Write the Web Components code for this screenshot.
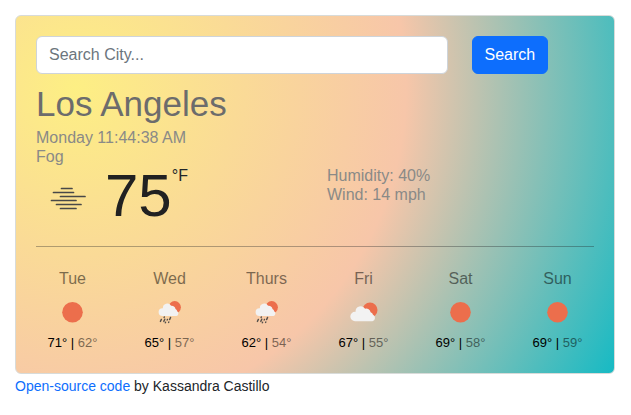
<!DOCTYPE html>
<html lang="en">
<head>
<meta charset="utf-8">
<title>Weather</title>
<style>
  body { margin: 0; background: #fff; color: #212529; font: 16px/24px "Liberation Sans", Arial, sans-serif; }
</style>
</head>
<body>
<weather-app></weather-app>

<template id="weather-app">
  <style>
    :host { display: block; padding: 15px 16px 15px 15px; }
    main { box-sizing: border-box; padding: 20px; border: 1px solid #d8dbd9; border-radius: 6px;
      background: radial-gradient(circle farthest-corner at 10% 20%, rgb(253,239,132) 0%, rgb(247,198,169) 54.2%, rgb(21,186,196) 100.3%); }
    hr { margin: 24px 0 16px; border: 0; border-top: 1px solid #212529; opacity: .35; }
    .week { display: grid; grid-template-columns: repeat(6, 1fr); margin: 0 -12px; }
    footer { font-size: 14px; line-height: 24px; }
    a { color: #0d6efd; text-decoration: none; }
  </style>
  <main>
    <city-search></city-search>
    <current-weather>
      <span slot="city">Los Angeles</span>
      <span slot="time">Monday 11:44:38 AM</span>
      <span slot="sky">Fog</span>
      <span slot="temp">75</span>
      <span slot="humidity">Humidity: 40%</span>
      <span slot="wind">Wind: 14 mph</span>
    </current-weather>
    <hr>
    <div class="week">
      <forecast-day icon="sun"><span slot="day">Tue</span><span slot="high">71°</span><span slot="low">62°</span></forecast-day>
      <forecast-day icon="rain"><span slot="day">Wed</span><span slot="high">65°</span><span slot="low">57°</span></forecast-day>
      <forecast-day icon="rain"><span slot="day">Thurs</span><span slot="high">62°</span><span slot="low">54°</span></forecast-day>
      <forecast-day icon="cloud"><span slot="day">Fri</span><span slot="high">67°</span><span slot="low">55°</span></forecast-day>
      <forecast-day icon="sun"><span slot="day">Sat</span><span slot="high">69°</span><span slot="low">58°</span></forecast-day>
      <forecast-day icon="sun"><span slot="day">Sun</span><span slot="high">69°</span><span slot="low">59°</span></forecast-day>
    </div>
  </main>
  <footer><a href="#">Open-source code</a> by Kassandra Castillo</footer>
</template>

<template id="city-search">
  <style>
    :host { display: block; }
    form { display: grid; grid-template-columns: calc(75% - 7px) auto; justify-content: start; column-gap: 24px; margin: 0; }
    input, button { box-sizing: border-box; height: 38px; padding: 6px 12px; border-radius: 6px; font: inherit; line-height: 24px; }
    input { width: 100%; min-width: 0; border: 1px solid #ced4da; background: #fff; color: #212529; }
    input::placeholder { color: #6c757d; opacity: 1; }
    button { border: 1px solid #0d6efd; background: #0d6efd; color: #fff; }
  </style>
  <form onsubmit="return false">
    <input type="search" placeholder="Search City..." aria-label="Search city">
    <button type="submit">Search</button>
  </form>
</template>

<template id="current-weather">
  <style>
    :host { display: block; margin-top: 9px; color: #8a8a87; line-height: 19px; }
    h1 { margin: 0; font-size: 35px; line-height: 42px; font-weight: 400; color: #6c6c6c; }
    p { margin: 0; }
    .meta { margin-top: 3px; }
    .row { display: grid; grid-template-columns: 1fr 1fr; column-gap: 24px; }
    .now { display: flex; height: 56px; color: #212121; }
    weather-icon { margin: 10px 4px 0 7px; }
    .temp { font-size: 60px; line-height: 59px; }
    .unit { line-height: 20px; color: #212529; }
  </style>
  <h1><slot name="city"></slot></h1>
  <p class="meta"><slot name="time"></slot></p>
  <p><slot name="sky"></slot></p>
  <div class="row">
    <div class="now">
      <weather-icon name="fog"></weather-icon>
      <span class="temp"><slot name="temp"></slot></span>
      <span class="unit">°F</span>
    </div>
    <div><p><slot name="humidity"></slot></p><p><slot name="wind"></slot></p></div>
  </div>
</template>

<template id="forecast-day">
  <style>
    :host { display: block; text-align: center; color: #000; }
    .day { line-height: 32px; opacity: .5; }
    weather-icon { margin: 0 auto; }
    .temps { margin-top: 2px; font-size: 13px; line-height: 20px; }
    .low { opacity: .5; }
  </style>
  <div class="day"><slot name="day"></slot></div>
  <weather-icon></weather-icon>
  <div class="temps"><slot name="high"></slot> | <span class="low"><slot name="low"></slot></span></div>
</template>

<script>
  const attach = (el) => {
    const root = el.attachShadow({ mode: "open" });
    root.append(document.getElementById(el.localName).content.cloneNode(true));
    return root;
  };

  const icons = {
    sun: [50, 36, "0 0 50 36", '<circle cx="24.500" cy="17.300" r="10.300" fill="#ec6e4c"/>'],
    cloud: [50, 36, "0 0 50 36", '<circle cx="31" cy="15" r="7.500" fill="#ec6e4c"/><path fill="#f2f2f2" d="M16 26.200a4.700 4.700 0 0 1 0-9.400h.6a5.100 5.100 0 0 1 9.500-3 4.300 4.300 0 0 1 5.500 3.400 3.200 3.200 0 0 1 2.400 2.600 3.400 3.400 0 0 1-.6 6.400z"/>'],
    rain: [50, 36, "0 0 50 36", '<circle cx="29.700" cy="12.300" r="6.200" fill="#ec6e4c"/><path fill="#f2f2f2" d="M17.500 21a3.900 3.900 0 0 1 0-7.800h.4a4.400 4.400 0 0 1 8.200-2.400 3.700 3.700 0 0 1 4.400 3.100 2.700 2.700 0 0 1 1.700 2.300 2.700 2.700 0 0 1-.6 4.800z"/><path stroke="#55504b" stroke-width="1.400" stroke-linecap="round" d="m16.400 24.400-1 2M19.300 21.900l-.2.600M19.800 24.200l-1 2.200M22.500 24.400l-.3.600M20.600 27.200l-.3.600M25.600 22.400l-1 2.200M23.800 27l-.2.4"/>'],
    fog: [58, 46, "0 0 58 46", '<path stroke="#484848" stroke-width="1.700" stroke-linecap="round" d="M18.500 12.500H29M10.500 16.500h20M17.500 20.500H42M8.500 24.500H33M13.500 28.500H38M17.500 32.500H33"/>']
  };

  customElements.define("weather-icon", class extends HTMLElement {
    static observedAttributes = ["name"];
    constructor() { super(); this.attachShadow({ mode: "open" }); }
    attributeChangedCallback(_, __, name) {
      const [w, h, box, art] = icons[name];
      this.shadowRoot.innerHTML = `<style>:host { display: block; width: ${w}px; flex: none; } svg { display: block; }</style>
        <svg width="${w}" height="${h}" viewBox="${box}" fill="none" aria-hidden="true">${art}</svg>`;
    }
  });
  customElements.define("forecast-day", class extends HTMLElement {
    constructor() { super(); attach(this); }
    connectedCallback() {
      this.shadowRoot.querySelector("weather-icon").setAttribute("name", this.getAttribute("icon"));
    }
  });
  for (const name of ["city-search", "current-weather", "weather-app"]) {
    customElements.define(name, class extends HTMLElement {
      constructor() { super(); attach(this); }
    });
  }
</script>
</body>
</html>
